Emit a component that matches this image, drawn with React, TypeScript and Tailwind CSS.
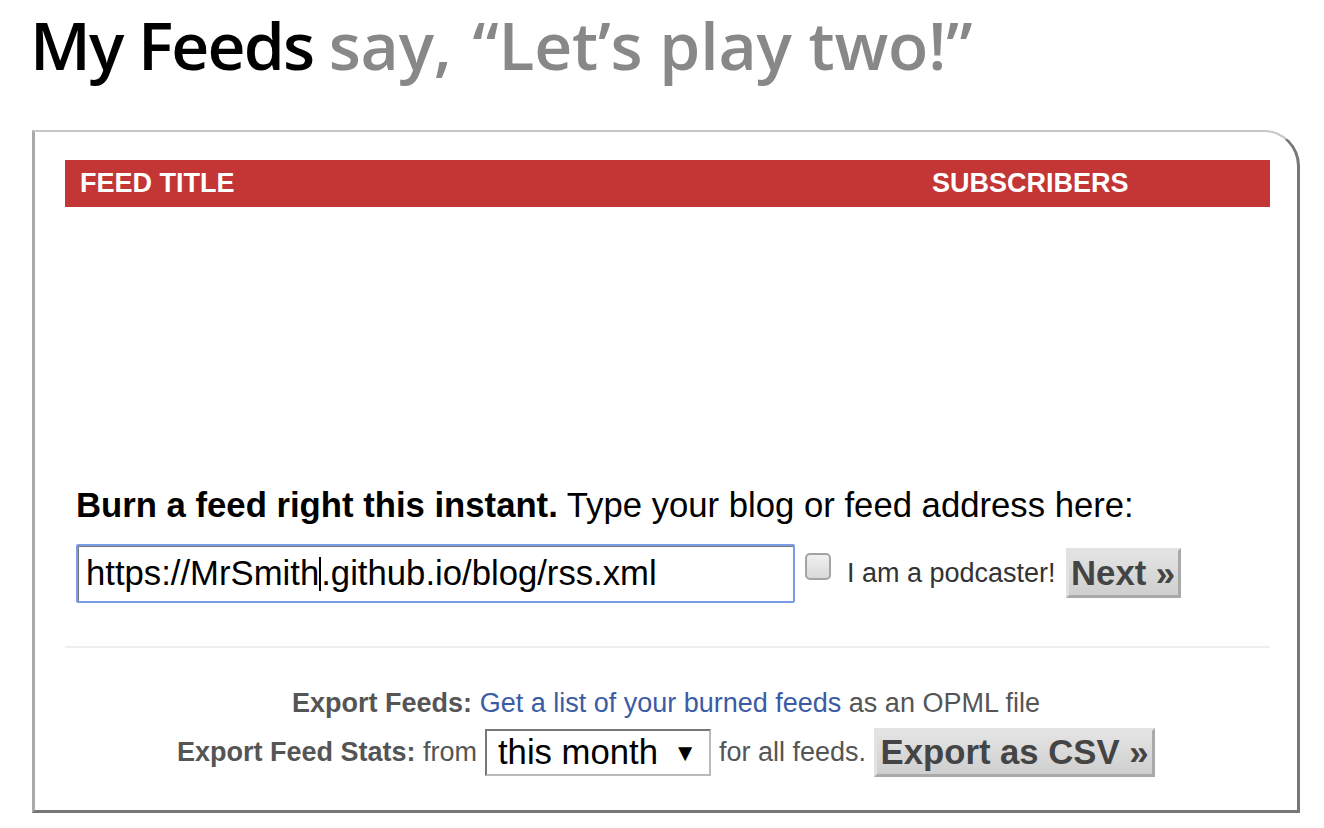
import React from 'react';

const sans = "font-['Liberation_Sans',Arial,sans-serif]";

function Checkbox() {
  return (
    <span className="mt-[9px] ml-[10px] inline-block h-[27px] w-[26px] shrink-0 rounded-[5px] border-2 border-[#a3a3a3] bg-gradient-to-b from-[#f0f0f0] to-[#d9d9d9]" />
  );
}

function GreyButton({ children, className = '' }: { children: React.ReactNode; className?: string }) {
  return (
    <button
      className={`shrink-0 whitespace-nowrap border-[3px] border-t-[#e2e2e2] border-l-[#e2e2e2] border-r-[#a9a9a9] border-b-[#a9a9a9] bg-gradient-to-b from-[#e4e4e4] to-[#cfcfcf] px-0 text-center text-[34.7px] font-bold leading-none text-[#444] ${className}`}
    >
      {children}
    </button>
  );
}

export default function App() {
  return (
    <div className={`h-[828px] w-[1324px] overflow-hidden bg-white ${sans}`}>
      <div className="h-[130px] pl-[30px] pt-[4px]">
        <h1 className="font-['Open_Sans',sans-serif] text-[66px] font-semibold leading-[80px] tracking-[-1.8px] whitespace-nowrap">
          <span className="text-black">My Feeds</span>{' '}
          <span className="tracking-[-0.2px] text-[#888]">
            say, <span className="ml-[4px]">“Let’s play two!”</span>
          </span>
        </h1>
      </div>

      <div className="ml-[32px] w-[1268px] rounded-tr-[36px] border-t-2 border-l-[3px] border-r-[3px] border-b-[3px] border-t-[#c6c6c6] border-l-[#aaa] border-r-[#777] border-b-[#777] pb-[33px] pt-[28px]">
        {/* table header */}
        <div className="ml-[30px] mr-[27px] flex h-[47px] items-center bg-[#c43535] text-[27px] font-bold text-white">
          <span className="w-[867px] pl-[15px]">FEED TITLE</span>
          <span>SUBSCRIBERS</span>
        </div>

        {/* burn form */}
        <div className="mt-[278px] pl-[41px]">
          <p className="text-[34.7px] leading-[40px] text-black">
            <b>Burn a feed right this instant.</b> Type your blog or feed address here:
          </p>
          <div className="mt-[19px] flex h-[59px] items-start">
            <div className="flex h-[59px] w-[719px] shrink-0 items-center rounded-[2px] border-2 border-[#7b9be6] pl-[8px] text-[34.7px] text-black shadow-[inset_1px_1px_0_#777]">
              <span>https://MrSmith</span>
              <span className="inline-block h-[34px] w-[2px] bg-black" />
              <span>.github.io/blog/rss.xml</span>
            </div>
            <Checkbox />
            <span className="ml-[16px] mt-[14px] text-[27px] leading-[31px] text-[#333]">I am a podcaster!</span>
            <GreyButton className="ml-[10px] mt-[4px] h-[50px] w-[115px]">Next »</GreyButton>
          </div>
        </div>

        <div className="ml-[30px] mr-[27px] mt-[43px] h-[2px] bg-[#eee]" />

        {/* export */}
        <div className="mt-[40px] flex flex-col items-center gap-[9px] text-[27px] leading-[31px] text-[#555]">
          <p>
            <b>Export Feeds:</b> <span className="text-[#3b5ba5]">Get a list of your burned feeds</span> as an OPML file
          </p>
          <div className="flex items-center gap-[8px]">
            <span>
              <b>Export Feed Stats:</b> from
            </span>
            <div className="flex h-[47px] w-[226px] items-center justify-between border-2 border-t-[#777] border-l-[#777] border-r-[#bbb] border-b-[#bbb] pl-[11px] pr-[12px] text-[34.7px] text-black">
              <span>this month</span>
              <span className="text-[24px]">▼</span>
            </div>
            <span>for all feeds.</span>
            <GreyButton className="h-[49px] w-[281px]">Export as CSV »</GreyButton>
          </div>
        </div>
      </div>
    </div>
  );
}
